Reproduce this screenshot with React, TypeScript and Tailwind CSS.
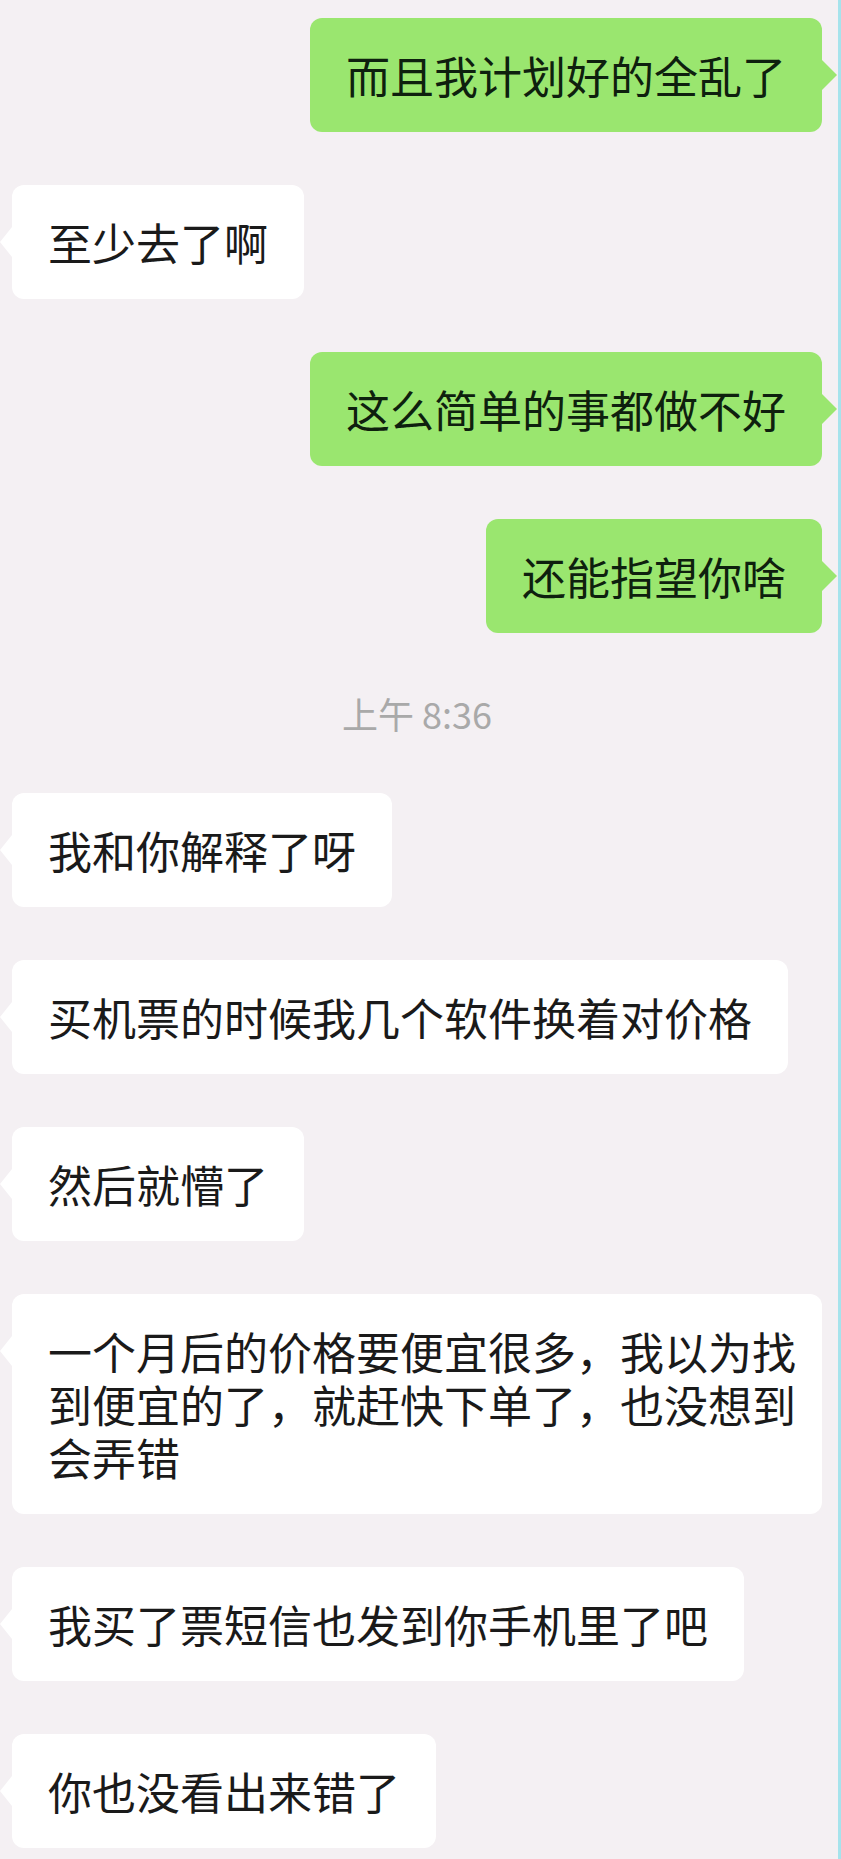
import React from 'react';

type Msg =
  | { kind: 'me'; text: string }
  | { kind: 'them'; text: string; wide?: boolean }
  | { kind: 'time'; text: string };

const messages: Msg[] = [
  { kind: 'me', text: '而且我计划好的全乱了' },
  { kind: 'them', text: '至少去了啊' },
  { kind: 'me', text: '这么简单的事都做不好' },
  { kind: 'me', text: '还能指望你啥' },
  { kind: 'time', text: '上午 8:36' },
  { kind: 'them', text: '我和你解释了呀' },
  { kind: 'them', text: '买机票的时候我几个软件换着对价格' },
  { kind: 'them', text: '然后就懵了' },
  {
    kind: 'them',
    wide: true,
    text: '一个月后的价格要便宜很多，我以为找到便宜的了，就赶快下单了，也没想到会弄错',
  },
  { kind: 'them', text: '我买了票短信也发到你手机里了吧' },
  { kind: 'them', text: '你也没看出来错了' },
];

function MyBubble({ text }: { text: string }) {
  return (
    <div className="flex justify-end">
      <div className="relative rounded-[12px] bg-[#9ae66f] px-9 py-[30.5px] text-[44px] leading-[53px] text-[#0e200e]">
        {text}
        {/* tail */}
        <span className="absolute left-full top-1/2 -translate-y-1/2 h-0 w-0 border-y-[15px] border-y-transparent border-l-[15px] border-l-[#9ae66f]" />
      </div>
    </div>
  );
}

function TheirBubble({ text, wide }: { text: string; wide?: boolean }) {
  return (
    <div className="flex justify-start">
      <div
        className={
          wide
            ? 'relative max-w-[811px] rounded-[12px] bg-white pl-9 pr-[26px] py-[30.5px] text-[44px] leading-[53px] text-[#1a1a1a]'
            : 'relative rounded-[12px] bg-white px-9 py-[30.5px] text-[44px] leading-[53px] text-[#1a1a1a]'
        }
      >
        {text}
        <span
          className={
            wide
              ? 'absolute right-full top-[42px] h-0 w-0 border-y-[15px] border-y-transparent border-r-[12px] border-r-white'
              : 'absolute right-full top-1/2 -translate-y-1/2 h-0 w-0 border-y-[15px] border-y-transparent border-r-[12px] border-r-white'
          }
        />
      </div>
    </div>
  );
}

export default function App() {
  return (
    <div className="min-h-screen w-full bg-[#f4f0f3] border-r-[3px] border-r-[#a6e3ec] pl-3 pr-4 pt-[18px] pb-[11px] font-['Noto_Sans_CJK_SC','Noto_Sans',sans-serif]">
      <div className="flex flex-col gap-[53px]">
        {messages.map((m, i) => {
          if (m.kind === 'time') {
            return (
              <div key={i} className="text-center text-[36px] leading-[54px] text-[#a9a9a9]">
                {m.text}
              </div>
            );
          }
          if (m.kind === 'me') return <MyBubble key={i} text={m.text} />;
          return <TheirBubble key={i} text={m.text} wide={m.wide} />;
        })}
      </div>
    </div>
  );
}
